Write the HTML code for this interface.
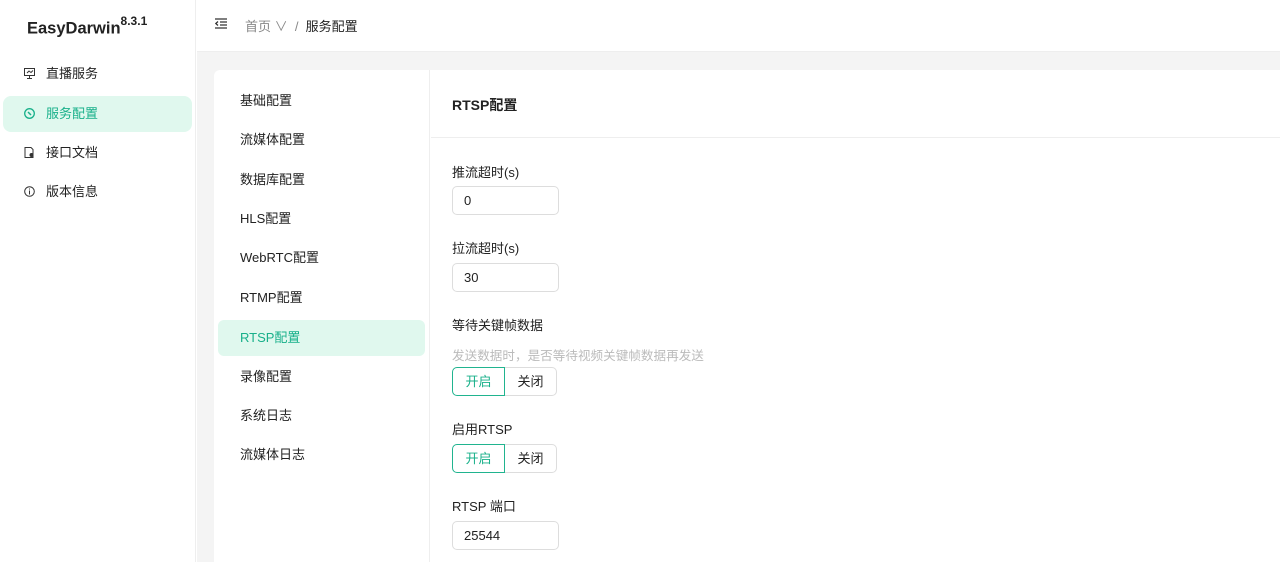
<!DOCTYPE html>
<html><head><meta charset="utf-8"><style>
*{margin:0;padding:0;box-sizing:border-box}
body{width:1280px;height:562px;overflow:hidden;background:#fff;font-family:"Liberation Sans","Noto Sans CJK SC",sans-serif;font-size:13px;color:#222;position:relative}
.abs{position:absolute}
.side{left:0;top:0;width:196px;height:562px;border-right:1px solid #eee;background:#fff}
.logo{left:27px;top:16px;font-size:16.5px;font-weight:bold;color:#222}
.logo sup{font-size:12px;position:relative;top:-2px}
.nav{left:3px;width:189px;height:36px;border-radius:8px;line-height:36px;padding-left:43px;font-size:13px;color:#222}
.nav.act{background:#e0f8ee;color:#18b08a}
.ico{position:absolute;left:21px;top:12px;width:11px;height:11px}
.header{left:197px;top:0;right:0;height:52px;border-bottom:1px solid #eee;background:#fff}
.gray{left:197px;top:52px;right:0;bottom:0;background:#f4f4f4}
.card{left:214px;top:70px;right:0;bottom:0;background:#fff;border-radius:6px 0 0 0}
.menu{left:214px;top:70px;width:216px;bottom:0;border-right:1px solid #eee}
.mi{left:218px;width:207px;height:36px;line-height:36px;padding-left:22px;border-radius:6px;color:#222}
.mi.act{background:#e0f8ee;color:#18b08a}
.lbl{left:452px;color:#222}
.inp{left:452px;width:107px;height:29px;border:1px solid #ddd;border-radius:5px;padding-left:11px;line-height:27px}
.sw{left:452px;width:106px;height:29px}
.sw span{position:absolute;top:0;height:29px;width:53px;line-height:27px;text-align:center;border:1px solid #ddd}
.sw .on{left:0;border-color:#20b48f;color:#18b08a;border-radius:5px 0 0 5px;z-index:1}
.sw .off{left:52px;border-radius:0 5px 5px 0}
</style></head><body>
<div class="abs side"></div>
<div class="abs logo">EasyDarwin<sup>8.3.1</sup></div>
<div class="abs nav" style="top:56px"><svg class="ico" viewBox="0 0 11 11"><rect x="0.5" y="0.5" width="10" height="7" fill="none" stroke="#333"/><path d="M5.5 8v3M3 10.5h5M3 5l2-2 2 1.5 2-2" stroke="#333" fill="none"/></svg>直播服务</div>
<div class="abs nav act" style="top:96px"><svg class="ico" viewBox="0 0 11 11"><circle cx="5.5" cy="5.5" r="4.8" fill="none" stroke="#18b08a" stroke-width="1.3"/><path d="M4 4l3 3" stroke="#18b08a" stroke-width="1.5"/></svg>服务配置</div>
<div class="abs nav" style="top:135px"><svg class="ico" viewBox="0 0 11 11"><path d="M1 .5h6l2 2v8H1z" fill="none" stroke="#333"/><circle cx="7.5" cy="8" r="2" fill="#333"/></svg>接口文档</div>
<div class="abs nav" style="top:174px"><svg class="ico" viewBox="0 0 11 11"><circle cx="5.5" cy="5.5" r="4.8" fill="none" stroke="#333"/><path d="M5.5 4.5v4M5.5 2.5v1" stroke="#333"/></svg>版本信息</div>
<div class="abs header"></div>
<svg class="abs" style="left:215px;top:18px" width="12" height="11" viewBox="0 0 12 11"><path d="M0 1h12M5 4h7M5 7h7M0 10h12M3 3.5L0.8 5.5 3 7.5" stroke="#333" stroke-width="1.3" fill="none"/></svg>
<div class="abs" style="left:245px;top:16px;color:#888">首页 ∨ &nbsp;/ &nbsp;<span style="color:#222">服务配置</span></div>
<div class="abs gray"></div>
<div class="abs card"></div>
<div class="abs menu"></div>
<div class="abs mi" style="top:83px">基础配置</div>
<div class="abs mi" style="top:122px">流媒体配置</div>
<div class="abs mi" style="top:162px">数据库配置</div>
<div class="abs mi" style="top:201px">HLS配置</div>
<div class="abs mi" style="top:240px">WebRTC配置</div>
<div class="abs mi" style="top:280px">RTMP配置</div>
<div class="abs mi act" style="top:320px">RTSP配置</div>
<div class="abs mi" style="top:359px">录像配置</div>
<div class="abs mi" style="top:398px">系统日志</div>
<div class="abs mi" style="top:437px">流媒体日志</div>
<div class="abs" style="left:452px;top:95px;font-size:14px;font-weight:bold;color:#222">RTSP配置</div>
<div class="abs" style="left:431px;right:0;top:137px;height:1px;background:#eee"></div>
<div class="abs lbl" style="top:162px">推流超时(s)</div>
<div class="abs inp" style="top:186px">0</div>
<div class="abs lbl" style="top:238px">拉流超时(s)</div>
<div class="abs inp" style="top:263px">30</div>
<div class="abs lbl" style="top:315px">等待关键帧数据</div>
<div class="abs lbl" style="top:345px;color:#bbb;font-size:12.6px">发送数据时，是否等待视频关键帧数据再发送</div>
<div class="abs sw" style="top:367px"><span class="on">开启</span><span class="off">关闭</span></div>
<div class="abs lbl" style="top:419px">启用RTSP</div>
<div class="abs sw" style="top:444px"><span class="on">开启</span><span class="off">关闭</span></div>
<div class="abs lbl" style="top:496px">RTSP 端口</div>
<div class="abs inp" style="top:521px">25544</div>
</body></html>
